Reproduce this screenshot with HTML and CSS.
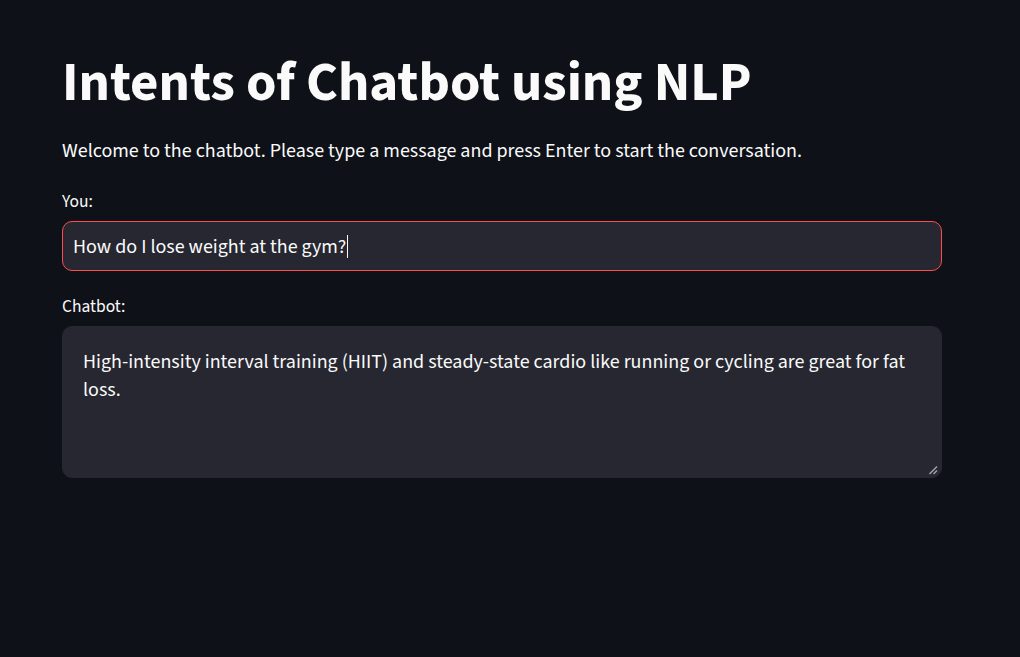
FILE: index.html
```html
<!DOCTYPE html>
<html lang="en">
<head>
<meta charset="utf-8">
<title>Intents of Chatbot using NLP</title>
<link rel="stylesheet" href="styles.css">
</head>
<body>
<main class="app">
  <div class="block">
    <h1 class="title">Intents of Chatbot using NLP</h1>
    <p class="intro">Welcome to the chatbot. Please type a message and press Enter to start the conversation.</p>

    <div class="field">
      <label class="label">You:</label>
      <div class="input">How do I lose weight at the gym?<span class="caret"></span></div>
    </div>

    <div class="field">
      <label class="label">Chatbot:</label>
      <div class="textarea">
        High-intensity interval training (HIIT) and steady-state cardio like running or cycling are great for fat loss.
        <svg class="resize" width="10" height="10" viewBox="0 0 10 10">
          <line x1="1.5" y1="9" x2="9" y2="1.5" stroke="#a5a5a5" stroke-width="1.4"/>
          <line x1="5.5" y1="9" x2="9" y2="5.5" stroke="#a5a5a5" stroke-width="1.4"/>
        </svg>
      </div>
    </div>
  </div>
</main>
</body>
</html>
```
FILE: styles.css
```css
html, body {
  margin: 0;
  padding: 0;
  background: #0e1117;
}

body {
  color: #fafafa;
  font-family: "Source Sans 3", "Source Sans Pro", "Noto Sans", sans-serif;
  font-size: 20px;
  height: 657px;
  overflow: hidden;
}

.app {
  padding: 50px 0 0 62px;
}

.block {
  width: 880px;
  display: flex;
  flex-direction: column;
}

.title {
  margin: 0;
  font-size: 55px;
  font-weight: 700;
  line-height: 66px;
  letter-spacing: 0;
}

.intro {
  margin: 19px 0 0;
  font-size: 20px;
  line-height: 32px;
}

.field {
  display: flex;
  flex-direction: column;
  margin-top: 21px;
}

.field + .field {
  margin-top: 22px;
}

.label {
  font-size: 17.5px;
  line-height: 28px;
  margin-bottom: 5px;
}

.input {
  box-sizing: border-box;
  height: 50px;
  border: 1px solid #ff4b4b;
  border-radius: 10px;
  background: #262730;
  padding: 1px 11px 0 10px;
  display: flex;
  align-items: center;
  font-size: 20px;
  white-space: nowrap;
}

.caret {
  display: inline-block;
  width: 1px;
  height: 23px;
  background: #fafafa;
  margin-left: 1px;
  margin-top: -1px;
}

.textarea {
  position: relative;
  box-sizing: border-box;
  height: 152px;
  border: 1px solid #262730;
  border-radius: 10px;
  background: #262730;
  padding: 21px 20px 20px;
  font-size: 20px;
  line-height: 28px;
}

.resize {
  position: absolute;
  right: 3px;
  bottom: 2px;
}
```
